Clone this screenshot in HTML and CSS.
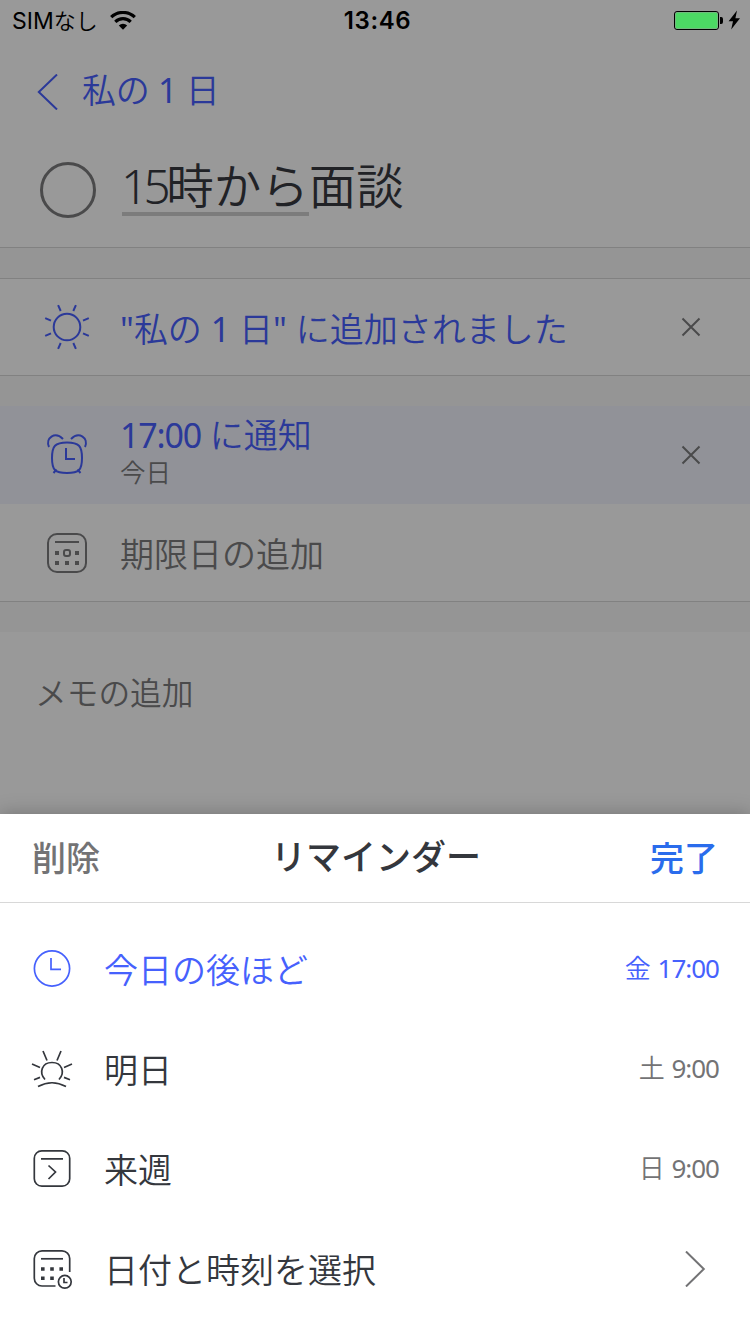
FILE: index.html
```html
<!DOCTYPE html>
<html lang="ja">
  <head>
    <meta charset="utf-8">
    <title>リマインダー</title>
    <link rel="stylesheet" href="styles.css">
  </head>
  <body>

    <div class="screen">
      <header class="status">
        <div class="carrier">
          <span>SIM<span class="kana">なし</span></span>
          <svg class="wifi" width="26" height="20" viewBox="0 0 26 20">
            <path d="M1.2 6.2a17 17 0 0 1 23.6 0" fill="none" stroke="#000" stroke-width="3.2"/>
            <path d="M5.3 10.8a11 11 0 0 1 15.4 0" fill="none" stroke="#000" stroke-width="3.2"/>
            <path d="M13 18.8l-4.2-4.4a6 6 0 0 1 8.4 0z"/>
          </svg>
        </div>
        <div class="clock">13:46</div>
        <div class="power">
          <svg width="68" height="22" viewBox="0 0 68 22">
            <rect x="0.5" y="1.5" width="44" height="18" rx="2.5" fill="#999" stroke="#000"/>
            <rect x="1.5" y="2.5" width="42" height="16" rx="1.5" fill="#4cd964"/>
            <path d="M46 7h1.2a2 2 0 0 1 1.8 2v3a2 2 0 0 1-1.8 2H46z"/>
            <path d="M63 0.5L54.6 11.2h4.4L57.2 19.5 66 8.2h-4.6z"/>
          </svg>
        </div>
      </header>

      <nav class="back">
        <svg width="22" height="36" viewBox="0 0 22 36"><path d="M20 0.5L1.8 18L20 35.5" fill="none" stroke="#2b3999" stroke-width="2"/></svg>
        <span>私の <b>1</b> 日</span>
      </nav>

      <div class="task">
        <span class="check"></span>
        <h1><span class="marked"><span class="num">15</span>時から</span>面談</h1>
      </div>

      <div class="gap"></div>

      <div class="row lined blue">
        <svg class="icon" width="48" height="48" viewBox="0 0 48 48" fill="none" stroke="#2b3999" stroke-width="2">
          <circle cx="24" cy="24" r="13.3"/>
          <path d="M15.1 2.2l2.6 5.8M32.9 2.2l-2.6 5.8M15.1 45.8l2.6-5.8M32.9 45.8l-2.6-5.8M2.2 15.1l5.8 2.6M2.2 32.9l5.8-2.6M45.8 15.1l-5.8 2.6M45.8 32.9l-5.8-2.6"/>
        </svg>
        <span class="label"><b>"</b>私の <b>1</b> 日<b>"</b> に追加されました</span>
        <svg class="close" width="20" height="20" viewBox="0 0 20 20"><path d="M1.5 1.5l17 17M18.5 1.5l-17 17"/></svg>
      </div>

      <div class="gap"></div>

      <div class="row active blue">
        <svg class="icon" width="48" height="48" viewBox="0 0 48 48" fill="none" stroke="#2b3999" stroke-width="2">
          <path d="M24 11.5C36 11.5 39 15 39 27S36 42 24 42S9 39 9 27S12 11.5 24 11.5z"/>
          <path d="M23 17v11h9"/>
          <path d="M6 16C2 7 12 0 20 8M42 16C46 7 36 0 28 8M13.5 38.5l-3 3.5M34.5 38.5l3 3.5"/>
        </svg>
        <div class="label">
          <div class="time"><b class="tight">17:00</b> に通知</div>
          <div class="sub">今日</div>
        </div>
        <svg class="close" width="20" height="20" viewBox="0 0 20 20"><path d="M1.5 1.5l17 17M18.5 1.5l-17 17"/></svg>
      </div>

      <div class="row due">
        <svg class="icon" width="48" height="48" viewBox="0 0 48 48" fill="none" stroke="#4a4a4b" stroke-width="2">
          <rect x="5" y="5" width="38" height="38" rx="9"/>
          <path d="M12 13h24"/>
          <rect x="21" y="21" width="6" height="6" rx="2"/>
          <path d="M12 24h4M32 24h4M12 34h4M22 34h4M32 34h4" stroke-width="4"/>
        </svg>
        <span class="label">期限日の追加</span>
      </div>

      <div class="gap"></div>

      <div class="memo">メモの追加</div>

      <section class="sheet">
        <div class="sheet-head">
          <span class="delete">削除</span>
          <h2>リマインダー</h2>
          <span class="done">完了</span>
        </div>
        <ul class="options">
          <li class="selected">
            <svg class="icon" width="48" height="48" viewBox="0 0 48 48" fill="none" stroke="#4661fd" stroke-width="1.7">
              <circle cx="24" cy="23.5" r="17.6"/>
              <path d="M23 13v11.300h10"/>
            </svg>
            <span class="name">今日の後ほど</span>
            <span class="when">金 <b class="tight">17:00</b></span>
          </li>
          <li>
            <svg class="icon" width="48" height="48" viewBox="0 0 48 48" fill="none" stroke="#34373d" stroke-width="1.7">
              <path d="M17 34.5C10.500 27.500 14 17.500 24 17.500S37.500 27.500 31 34.500"/>
              <path d="M15 6l4 9.5M33 6l-4 9.5M4 19l8 3.5M44 19l-8 3.5M6 34.800l6-2.400M42 34.800l-6-2.400M10 41.500q14-7.500 28 0"/>
            </svg>
            <span class="name">明日</span>
            <span class="when">土 <b class="tight">9:00</b></span>
          </li>
          <li>
            <svg class="icon" width="48" height="48" viewBox="0 0 48 48" fill="none" stroke="#34373d" stroke-width="1.7">
              <rect x="6.300" y="5.800" width="35.400" height="35.400" rx="7.500"/>
              <path d="M13 13.800h22M20.500 20.500l7 6.500L20.500 34"/>
            </svg>
            <span class="name">来週</span>
            <span class="when">日 <b class="tight">9:00</b></span>
          </li>
          <li>
            <svg class="icon" width="48" height="48" viewBox="0 0 48 48" fill="none" stroke="#34373d" stroke-width="1.7">
              <path d="M27.500 41H14a7.700 7.700 0 0 1-7.700-7.700V13.500A7.700 7.700 0 0 1 14 5.800h20a7.700 7.700 0 0 1 7.700 7.700v13.500"/>
              <path d="M13 13.800h22"/>
              <path d="M13 24h3.600M22.200 24h3.600M31.400 24h3.600M13 33.200h3.600M22.200 33.200h3.600" stroke-width="3.6"/>
              <circle cx="36.800" cy="36.800" r="6.400"/>
              <path d="M36 33v4.500h3.500"/>
            </svg>
            <span class="name">日付と時刻を選択</span>
            <svg class="chevron" width="22" height="36" viewBox="0 0 22 36"><path d="M2 0.5L19.8 18L2 35.5" fill="none" stroke="#737375" stroke-width="2"/></svg>
          </li>
        </ul>
      </section>
    </div>

  </body>
</html>
```
FILE: styles.css
```css
* {
  box-sizing: border-box;
}

body {
  margin: 0;
  font-family: "Noto Sans", "Noto Sans CJK JP", sans-serif;
  font-weight: 350;
  font-size: 34px;
  color: #4a4a4b;
}

/* latin digits need the regular cut next to the thin kanji */
b {
  font-weight: 400;
}

.screen {
  width: 750px;
  height: 1334px;
  overflow: hidden;
  background-color: #999999;
  display: flex;
  flex-direction: column;
}

svg {
  display: block;
  flex: none;
}

/* status bar */
.status {
  height: 40px;
  display: grid;
  grid-template-columns: 1fr auto 1fr;
  align-items: center;
  padding: 2px 8px 0 12px;
  color: #000000;
  font-size: 24px;
  line-height: 38px;
}

.carrier {
  display: flex;
  align-items: center;
  gap: 12px;
  font-family: Inter, "Noto Sans CJK JP", sans-serif;
  font-size: 23px;
  font-weight: 400;
}

.kana {
  font-size: 22px;
  font-weight: 350;
}

.clock {
  font-family: Inter, sans-serif;
  font-weight: 600;
  letter-spacing: 0.6px;
  margin-left: 1px;
}

.power {
  justify-self: end;
}

/* task header */
.back {
  height: 100px;
  display: flex;
  align-items: center;
  gap: 23px;
  padding: 4px 0 0 37px;
  color: #2b3999;
}

.back span {
  line-height: 50px;
  margin-top: -4px;
  letter-spacing: -0.3px;
}

.task {
  height: 108px;
  display: flex;
  align-items: center;
  gap: 26px;
  padding: 0 0 8px 40px;
  border-bottom: 1px solid #818181;
}

.check {
  width: 56px;
  height: 56px;
  border: 3px solid #4a4a4b;
  border-radius: 50%;
}

h1 {
  margin: -4px 0 0;
  font-size: 47.5px;
  font-weight: 350;
  line-height: 53px;
  color: #212226;
  display: flex;
}

.marked {
  border-bottom: 4px solid #7c7c7c;
}

.num {
  margin-left: -1px;
  letter-spacing: -4.5px;
}

.gap {
  flex: none;
  height: 30px;
  background-color: #959595;
}

/* rows */
.row {
  flex: none;
  height: 97px;
  display: flex;
  align-items: center;
  padding: 0 49px 0 43px;
}

.row .label {
  flex: 1;
  margin-left: 29px;
}

.blue {
  color: #2b3999;
}

.lined {
  height: 98px;
  border-top: 1px solid #818181;
  border-bottom: 1px solid #818181;
}

.active {
  height: 98px;
  background-color: #919298;
}

.due {
  height: 98px;
  border-bottom: 1px solid #818181;
}

.time {
  margin-top: -4px;
  line-height: 38px;
}

.tight {
  letter-spacing: -1.2px;
}

.sub {
  font-size: 25.5px;
  line-height: 36px;
  color: #4a4a4b;
}

.close path {
  stroke: #4a4a4b;
  stroke-width: 2;
}

.memo {
  flex: 1;
  padding: 36px 35px;
  font-size: 31.7px;
  line-height: 50px;
}

/* bottom sheet */
.sheet {
  flex: none;
  height: 520px;
  background-color: #ffffff;
  box-shadow: 0 0 18px rgba(0, 0, 0, 0.25);
  color: #34373d;
}

.sheet-head {
  height: 89px;
  display: grid;
  grid-template-columns: 1fr auto 1fr;
  align-items: center;
  padding: 0 32px 4px;
  border-bottom: 1px solid #d8d8d8;
  font-weight: 500;
}

.sheet-head h2 {
  margin: -4px 0 0 2px;
  font-size: 35px;
  font-weight: 500;
}

.delete {
  color: #737375;
}

.done {
  justify-self: end;
  color: #2a6cec;
}

.options {
  margin: 0;
  padding: 16px 30px 0 28px;
  list-style: none;
}

.options li {
  height: 100px;
  display: flex;
  align-items: center;
}

.name {
  flex: 1;
  margin: -2px 0 0 28px;
}

.when {
  margin: -4px 1px 0 0;
  font-size: 26px;
  color: #737375;
}

.when .tight {
  letter-spacing: -1px;
}

.selected,
.selected .when {
  color: #4661fd;
}

.chevron {
  margin: -1px 14px 0 0;
}
```
